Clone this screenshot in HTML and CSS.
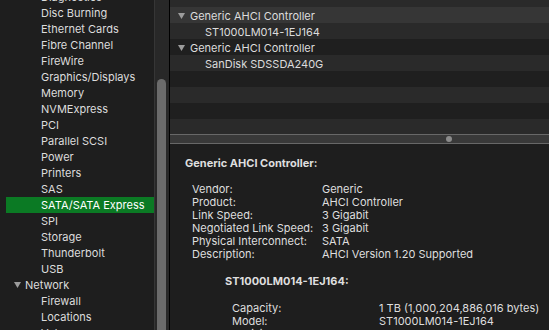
FILE: index.html
```html
<!DOCTYPE html>
<html lang="en">
<head>
    <meta charset="UTF-8">
    <meta name="viewport" content="width=device-width, initial-scale=1.0">
    <title>System Information</title>
    <link rel="stylesheet" href="styles.css">
</head>
<body>
    <div class="sidebar">
        <div class="list">
            <div class="item">Diagnostics</div>
            <div class="item">Disc Burning</div>
            <div class="item">Ethernet Cards</div>
            <div class="item">Fibre Channel</div>
            <div class="item">FireWire</div>
            <div class="item">Graphics/Displays</div>
            <div class="item">Memory</div>
            <div class="item">NVMExpress</div>
            <div class="item">PCI</div>
            <div class="item">Parallel SCSI</div>
            <div class="item">Power</div>
            <div class="item">Printers</div>
            <div class="item">SAS</div>
            <div class="item selected">SATA/SATA Express</div>
            <div class="item">SPI</div>
            <div class="item">Storage</div>
            <div class="item">Thunderbolt</div>
            <div class="item">USB</div>
            <div class="item group">
                <svg class="tri" width="7" height="6" viewBox="0 0 7 6"><path d="M0 0H7L3.5 6Z"/></svg>
                Network
            </div>
            <div class="item">Firewall</div>
            <div class="item">Locations</div>
            <div class="item">Volumes</div>
        </div>
    </div>
    <div class="scrolltrack"><div class="thumb"></div></div>
    <div class="divider"></div>
    <div class="main">
        <div class="outline">
            <div class="row light"></div>
            <div class="row current">
                <svg class="tri" width="7" height="6" viewBox="0 0 7 6"><path d="M0 0H7L3.5 6Z"/></svg>
                Generic AHCI Controller
            </div>
            <div class="row light child">ST1000LM014-1EJ164</div>
            <div class="row">
                <svg class="tri" width="7" height="6" viewBox="0 0 7 6"><path d="M0 0H7L3.5 6Z"/></svg>
                Generic AHCI Controller
            </div>
            <div class="row light child">SanDisk SDSSDA240G</div>
            <div class="row"></div>
            <div class="row light"></div>
            <div class="row"></div>
            <div class="row light"></div>
        </div>
        <div class="split"><span class="knob"></span></div>
        <div class="detail">
            <div class="heading">Generic AHCI Controller:</div>
            <div class="props">
                <span>Vendor:</span><span>Generic</span>
                <span>Product:</span><span>AHCI Controller</span>
                <span>Link Speed:</span><span>3 Gigabit</span>
                <span>Negotiated Link Speed:</span><span>3 Gigabit</span>
                <span>Physical Interconnect:</span><span>SATA</span>
                <span>Description:</span><span>AHCI Version 1.20 Supported</span>
            </div>
            <div class="heading sub">ST1000LM014-1EJ164:</div>
            <div class="props sub">
                <span>Capacity:</span><span>1 TB (1,000,204,886,016 bytes)</span>
                <span>Model:</span><span>ST1000LM014-1EJ164</span>
                <span>Revision:</span><span>SM26</span>
            </div>
        </div>
    </div>
</body>
</html>
```

FILE: styles.css
```css
body {
    margin: 0;
    height: 330px;
    overflow: hidden;
    display: flex;
    background-color: #1e1e1e;
    color: #dcdcdc;
    font-family: Inter, "Helvetica Neue", Arial, sans-serif;
    font-size: 11px;
}
.sidebar {
    width: 154px;
    flex-shrink: 0;
    overflow: hidden;
    background-color: #1e1e1e;
}
.list {
    margin-top: -11px;
}
.item {
    height: 16px;
    line-height: 17px;
    margin-left: 6px;
    padding-left: 35px;
    white-space: nowrap;
}
.item.selected {
    background-color: #0b7a24;
    color: #ffffff;
}
.item.group {
    padding-left: 8px;
    display: flex;
    align-items: center;
    gap: 4px;
}
.tri {
    fill: #9c9c9c;
    flex-shrink: 0;
}
.scrolltrack {
    width: 14px;
    flex-shrink: 0;
    border-left: 1px solid #363636;
    background-color: #282828;
    padding-top: 79px;
}
.thumb {
    width: 9px;
    height: 300px;
    margin-left: 2px;
    border-radius: 5px 5px 0 0;
    background-color: #6b6b6b;
}
.divider {
    width: 1px;
    flex-shrink: 0;
    background-color: #000000;
}
.main {
    flex: 1;
    display: flex;
    flex-direction: column;
    min-width: 0;
}
.outline {
    height: 134px;
    overflow: hidden;
    flex-shrink: 0;
}
.row {
    box-sizing: border-box;
    height: 16px;
    padding-top: 2px;
    display: flex;
    align-items: center;
    gap: 5px;
    padding-left: 8px;
    background-color: #1f1f1f;
    white-space: nowrap;
}
.row:first-child {
    margin-top: -9px;
}
.row.light {
    background-color: #2a2a2a;
}
.row.current {
    background-color: #363636;
}
.row.child {
    padding-left: 35px;
}
.split {
    height: 8px;
    flex-shrink: 0;
    border-top: 1px solid #686868;
    border-bottom: 1px solid #686868;
    background-color: #393939;
    display: flex;
    align-items: center;
}
.knob {
    width: 6px;
    height: 6px;
    margin-left: 276px;
    border-radius: 50%;
    background-color: #8c8c8c;
}
.detail {
    flex: 1;
    padding: 13px 0 0 15px;
    line-height: 13px;
    color: #dedede;
    white-space: nowrap;
}
.heading {
    font-weight: bold;
    margin-bottom: 13px;
}
.heading.sub {
    margin: 14px 0 14px 40px;
}
.props {
    display: grid;
    grid-template-columns: 130px auto;
    padding-left: 7px;
}
.props.sub {
    grid-template-columns: 147px auto;
    padding-left: 47px;
}
```
